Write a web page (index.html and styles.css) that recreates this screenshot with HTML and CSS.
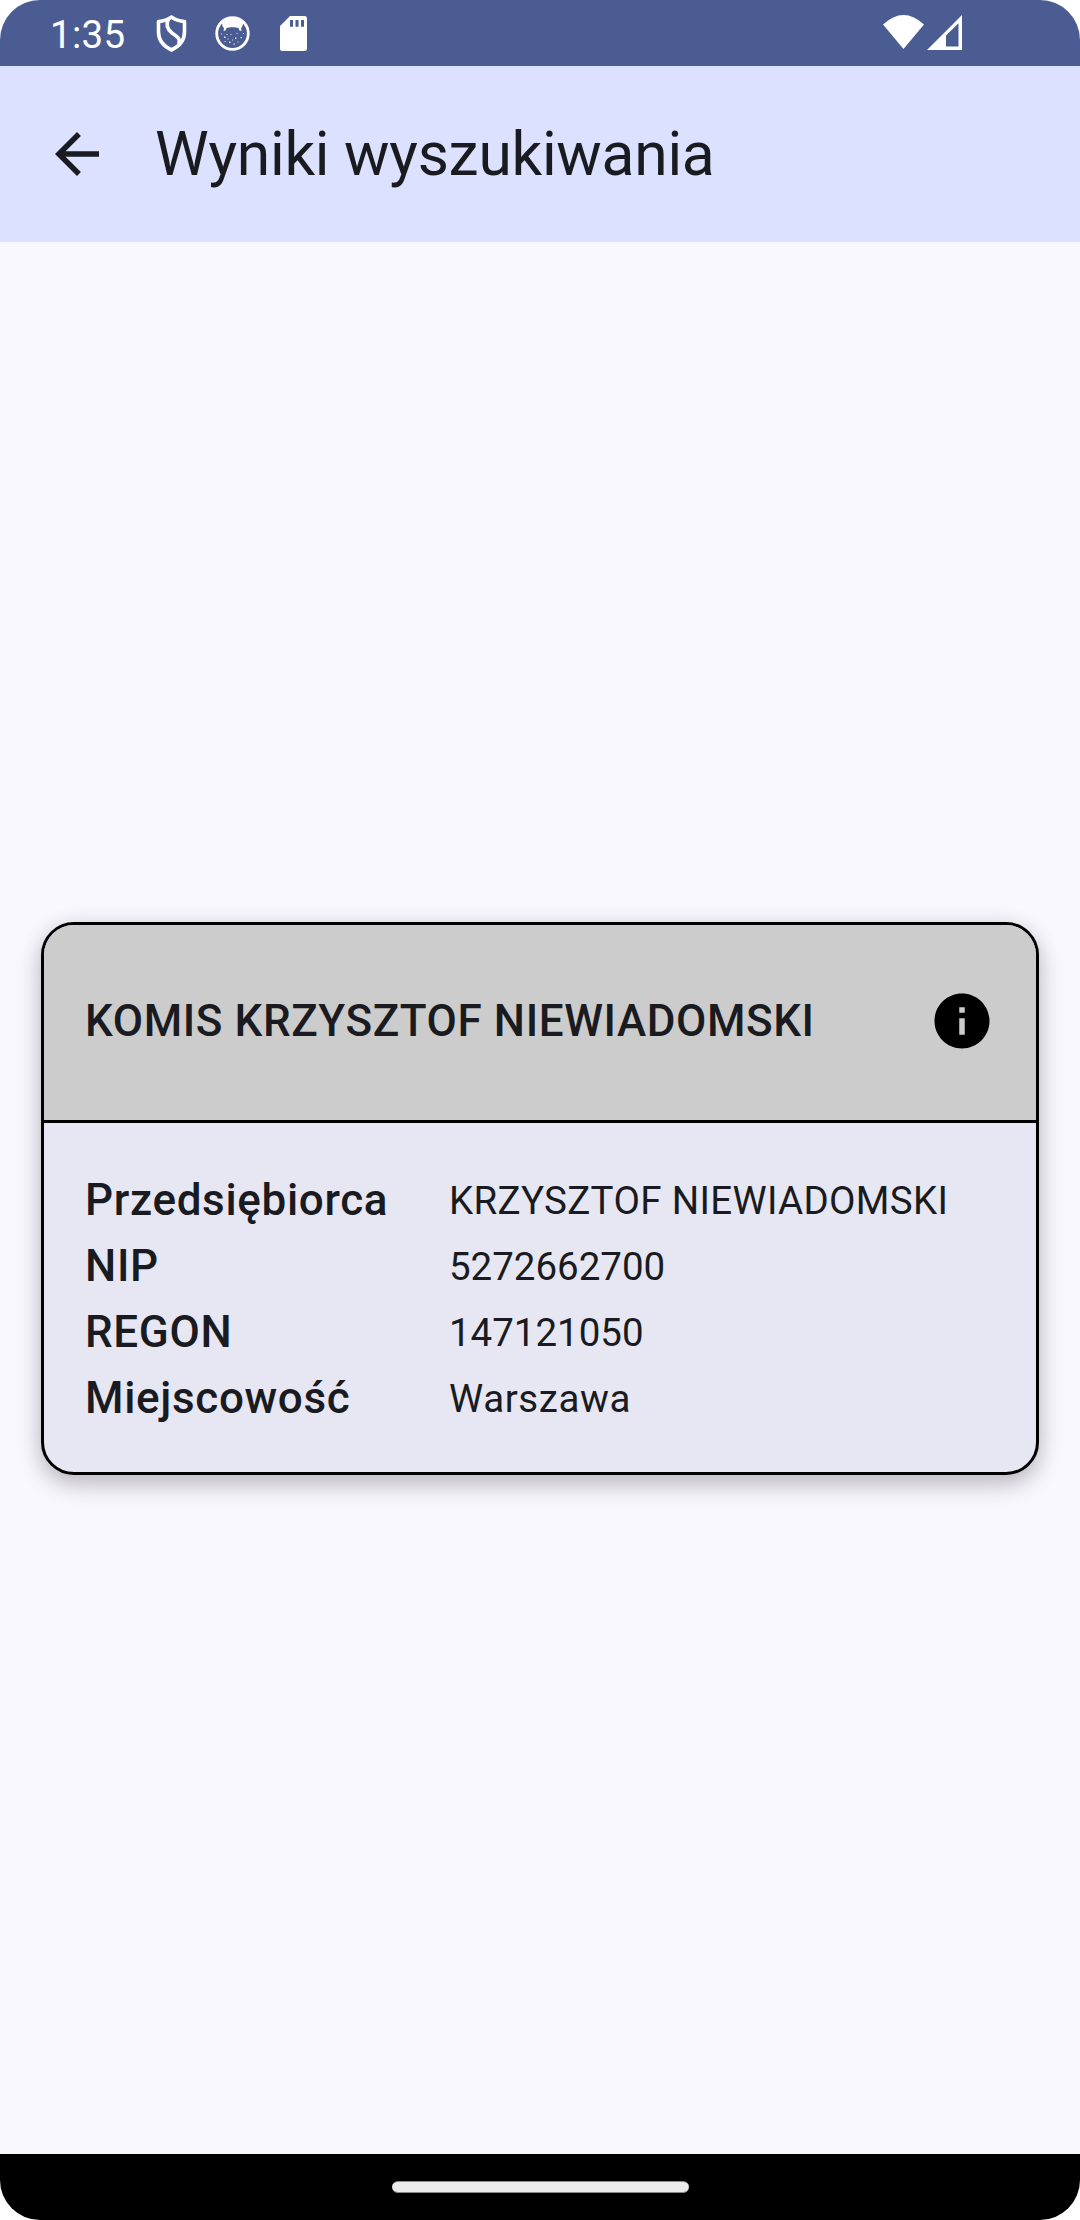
FILE: index.html
```html
<!DOCTYPE html>
<html lang="pl">
<head>
<meta charset="utf-8">
<title>Wyniki wyszukiwania</title>
<link rel="stylesheet" href="styles.css">
</head>
<body>
<div class="screen">
  <header class="status-bar">
    <span class="clock">1:35</span>
    <svg class="icon-shield" width="32" height="38" viewBox="0 0 32 38" fill="none" stroke="#fff" stroke-width="3.600" stroke-linejoin="round">
      <path d="M15.500 2C11.500 4.800 7 6.200 2.500 6.600V17C2.500 25 7 31 15.500 35C24 31 28.500 25 28.500 17V6.600C24 6.200 19.500 4.800 15.500 2Z"/>
      <path d="M12.500 4C9.500 10 11 14 16 18C22 22 25 24.500 22.500 29"/>
    </svg>
    <svg class="icon-cat" width="35" height="35" viewBox="0 0 35 35">
      <circle cx="17.500" cy="17.500" r="15.800" fill="none" stroke="#fff" stroke-width="2.800"/>
      <path fill="#fff" d="M7 7C12 0 23 0 28 7C28 9.500 27 11 26 12.500L26.500 15L24.500 14.500L23.500 12C21 11 14 11 11.500 12L10.500 14.500L8.500 15L9 12.500C8 11 7 9.500 7 7Z"/>
      <path fill="#fff" opacity=".85" d="M9 20.500h1.500v1.500H9zM15.500 18h1v1h-1zM20 21.500h1.500v1.500H20zM25.500 21h1.300v1.300h-1.300zM14 25.500h1.500v1.500H14zM6 17.500h1v1H6zM28 17h1v1h-1zM18.500 27.500h1.300v1.300h-1.300zM21.500 17h1v1h-1zM12.500 22.500h1v1h-1zM22.500 25.500h1v1h-1zM9.500 25h1v1h-1zM17 23.500h1v1h-1zM11.500 18h1v1h-1z"/>
    </svg>
    <svg class="icon-sd" width="27" height="35" viewBox="0 0 27 35">
      <path fill="#fff" fill-rule="evenodd" d="M10 0H24.500Q27 0 27 2.500V32.500Q27 35 24.500 35H2.500Q0 35 0 32.500V10ZM10 4V10.700H13V4ZM15.500 4V10.700H18.500V4ZM21 4V10.700H24V4Z"/>
    </svg>
    <span class="spacer"></span>
    <svg class="icon-wifi" width="41" height="34" viewBox="0 0 41 34"><path fill="#fff" d="M0 9.500Q20.500-9.500 41 9.500L20.500 34Z"/></svg>
    <svg class="icon-signal" width="35" height="35" viewBox="0 0 35 35"><path fill="#fff" fill-rule="evenodd" d="M0 35L35 0V35ZM19 20.500V31.500H31.500V8.300Z"/></svg>
  </header>
  <div class="app-bar">
    <svg width="66" height="66" viewBox="0 0 24 24"><path fill="#1a1b21" d="M20 11H7.830l5.590-5.590L12 4l-8 8 8 8 1.410-1.410L7.830 13H20v-2z"/></svg>
    <h1 class="title">Wyniki wyszukiwania</h1>
  </div>
  <main class="content">
    <article class="card">
      <div class="card-header">
        <h2 class="company">KOMIS KRZYSZTOF NIEWIADOMSKI</h2>
        <svg width="66" height="66" viewBox="0 0 24 24"><path d="M12 2C6.480 2 2 6.480 2 12s4.480 10 10 10 10-4.480 10-10S17.520 2 12 2zm1 15h-2v-6h2v6zm0-8h-2V7h2v2z"/></svg>
      </div>
      <dl class="details">
        <dt>Przedsiębiorca</dt><dd class="owner">KRZYSZTOF NIEWIADOMSKI</dd>
        <dt>NIP</dt><dd class="number">5272662700</dd>
        <dt>REGON</dt><dd class="number">147121050</dd>
        <dt>Miejscowość</dt><dd>Warszawa</dd>
      </dl>
    </article>
  </main>
  <footer class="nav-bar"><span class="handle"></span></footer>
</div>
</body>
</html>
```
FILE: styles.css
```css
* { box-sizing: border-box; }

body {
  margin: 0;
  background: #fff;
  font-family: Roboto, "Liberation Sans", sans-serif;
  color: #1a1b21;
}

h1, h2, dl, dd { margin: 0; }
svg { display: block; flex: none; }

.screen {
  display: flex;
  flex-direction: column;
  width: 1080px;
  height: 2220px;
  overflow: hidden;
  border-radius: 40px;
  background: #faf8ff;
}

.status-bar {
  display: flex;
  align-items: flex-start;
  height: 66px;
  padding: 15px 118px 0 50px;
  background: #4b5c92;
  color: #fff;
}

.clock {
  width: 106px;
  margin-top: -3px;
  font-size: 38.5px;
  line-height: 45px;
  letter-spacing: .3px;
}

.icon-cat { margin: 1px 0 0 27px; }
.icon-sd { margin: 1px 0 0 30px; }
.spacer { flex: 1; }
.icon-signal { margin-left: 3px; }

.app-bar {
  display: flex;
  align-items: center;
  gap: 45px;
  height: 176px;
  padding-left: 44px;
  background: #dbe1ff;
}

.title {
  font-size: 60.5px;
  font-weight: 400;
  line-height: 77px;
  letter-spacing: -.25px;
}

.content {
  flex: 1;
  display: flex;
  flex-direction: column;
  justify-content: center;
  padding: 0 41px;
}

.card {
  overflow: hidden;
  border: 3px solid #000;
  border-radius: 33px;
  background: #e7e7f3;
  box-shadow: 0 10px 24px rgba(0, 0, 0, .21), 0 2px 22px rgba(0, 0, 0, .09);
}

.card-header {
  display: flex;
  align-items: center;
  justify-content: space-between;
  height: 198px;
  padding: 0 41px 3px;
  border-bottom: 3px solid #000;
  background: #ccc;
}

.company, .details dt {
  font-size: 44px;
  font-weight: 500;
  line-height: 66px;
}

.company { letter-spacing: .59px; }
.details dt { letter-spacing: .66px; }

.details {
  display: grid;
  grid-template-columns: 364px 1fr;
  grid-auto-rows: 66px;
  padding: 44px 41px 41px;
}

.details dd {
  padding-top: 1px;
  font-size: 38.5px;
  line-height: 66px;
  letter-spacing: .6px;
  white-space: nowrap;
}

.details .owner { letter-spacing: .32px; }
.details .number { letter-spacing: -.02px; }

.nav-bar {
  display: flex;
  justify-content: center;
  height: 66px;
  padding-top: 27px;
  background: #000;
}

.handle {
  width: 297px;
  height: 12px;
  border-block: 1px solid #8a8a8a;
  border-radius: 6px;
  background: #ececec;
}
```
